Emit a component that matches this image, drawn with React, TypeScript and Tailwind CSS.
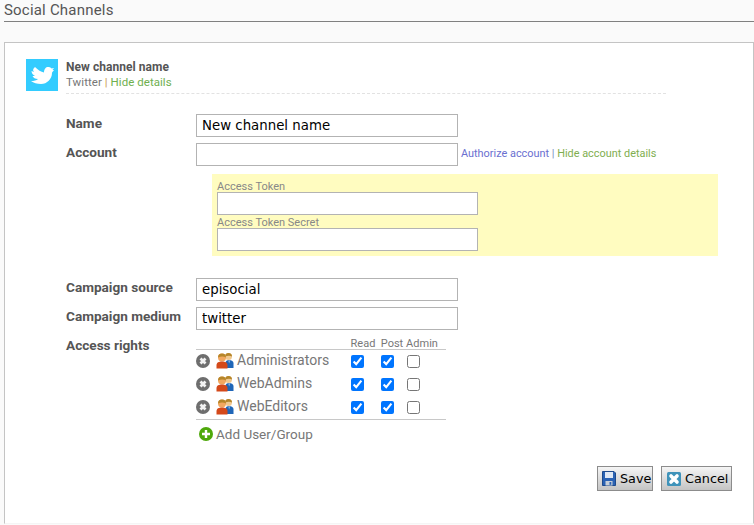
const labelClass = 'w-[130px] shrink-0 text-[13.600px] font-bold leading-[18px] text-[#555]';
const inputClass = 'block h-[23px] w-[262px] border border-[#b3b3b3] bg-white px-[5px] font-["DejaVu_Sans"] text-[13.333px] text-black outline-none';
const buttonClass = 'flex h-[25px] items-center gap-1 border border-[#8c8c8c] bg-gradient-to-b from-[#f5f5f5] to-[#c4c4c4] font-["DejaVu_Sans"] text-[12.800px] text-black';

const rights = [
  { name: 'Administrators', read: true, post: true, admin: false },
  { name: 'WebAdmins', read: true, post: true, admin: false },
  { name: 'WebEditors', read: true, post: true, admin: false },
];

function TwitterIcon(): React.ReactElement {
  return (
    <div className="h-8 w-8 shrink-0 bg-[#33ccff]">
      <svg width="32" height="32" viewBox="0 0 32 32" fill="#fff">
        <path d="M9 8C12 11 15 13 18 13.500C18 10 20 8 22 8C23.500 8 25 8.500 25.500 9.500L28 9L26.500 11L28 11C27 12.500 26 13 26 14C26 20 21 25 15 25C11 25 7.500 24 5 22C8 22 10.500 21.500 12 20C9 20 7.500 19 6.500 17L9 17C7 16 5.500 14 5.500 12L8 13C6.500 11.500 7 9.500 9 8Z" />
      </svg>
    </div>
  );
}

function RemoveIcon(): React.ReactElement {
  return (
    <svg width="14" height="14" viewBox="0 0 14 14" className="shrink-0">
      <circle cx="7" cy="7" r="7" fill="#6e6e6e" />
      <path d="M4.500 4.500l5 5M9.500 4.500l-5 5" stroke="#f2f2f2" strokeWidth="2.800" />
    </svg>
  );
}

function UsersIcon(): React.ReactElement {
  return (
    <svg width="18" height="17" viewBox="0 0 18 17" className="block shrink-0">
      <circle cx="12.500" cy="4.500" r="3.500" fill="#f0c890" />
      <path d="M9 4.500a3.500 3.500 0 0 1 7 0c-1.500-1-4.500-1-7 0z" fill="#b5862a" />
      <path d="M9.500 16V11c0-2 1.500-3 3.500-3s4.500 1 4.500 3v5z" fill="#1f66b8" />
      <path d="M12.500 8.500h1.200l-.6 3z" fill="#e6eef7" />
      <circle cx="6" cy="5.500" r="4" fill="#f2a860" />
      <path d="M2 5.500a4 4 0 0 1 8 0c-2-1.200-5.500-1.200-8 0z" fill="#b5862a" />
      <path d="M.5 16.500V13c0-2.500 2.500-3.500 5.500-3.500s5.500 1 5.500 3.500v3.500z" fill="#d4491a" />
    </svg>
  );
}

function AddIcon(): React.ReactElement {
  return (
    <svg width="14" height="14" viewBox="0 0 14 14" className="shrink-0">
      <circle cx="7" cy="7" r="7" fill="#4ea80b" />
      <path d="M7 3v8M3 7h8" stroke="#fff" strokeWidth="2.400" />
    </svg>
  );
}

function SaveIcon(): React.ReactElement {
  return (
    <svg width="14" height="15" viewBox="0 0 14 15" className="shrink-0">
      <path d="M.5.500h11.500l1.500 1.500v12.500H.5z" fill="#2a62b4" stroke="#1d4a8c" />
      <rect x="3" y="1" width="8" height="6" fill="#dfe8f4" />
      <rect x="3.500" y="10" width="7" height="4.500" fill="#c7cfd8" />
      <rect x="7.500" y="11" width="1.800" height="2.800" fill="#2a62b4" />
    </svg>
  );
}

function CancelIcon(): React.ReactElement {
  return (
    <svg width="14" height="14" viewBox="0 0 14 14" className="shrink-0">
      <rect width="14" height="14" rx="1.500" fill="#3f93ba" />
      <path d="M4 4l6 6M10 4l-6 6" stroke="#fff" strokeWidth="3.600" strokeLinecap="round" />
    </svg>
  );
}

function RightBox({ checked }: { checked: boolean }): React.ReactElement {
  return (
    <input
      type="checkbox"
      defaultChecked={checked}
      className="m-0 h-[13px] w-[13px] accent-[#0075ff]"
    />
  );
}

export default function App(): React.ReactElement {
  return (
    <div className="h-[525px] overflow-hidden bg-[#fafafa] pl-1 font-['Roboto',sans-serif]">
      <h1 className="h-[22px] border-b border-[#808080] pt-[3px] text-[15px] leading-[15px] tracking-[.2px] text-[#555]">
        Social Channels
      </h1>

      <div className="mt-5 h-[482px] border border-[#c4c4c4] border-b-[#f5f5f5] bg-white pl-[21px] pt-[16px]">
        <div className="flex gap-2">
          <TwitterIcon />
          <div className="h-[35px] w-[600px] border-b border-dashed border-[#e2e2e2] pt-[1px] text-[11.500px] leading-[15px] tracking-[.05px]">
            <div className="text-[12px] font-bold text-[#555]">New channel name</div>
            <div className="text-[#777]">
              Twitter <span className="text-[#c89a55]">|</span>{' '}
              <a className="text-[#6fb04f]">Hide details</a>
            </div>
          </div>
        </div>

        <div className="ml-10 mt-5">
          <div className="flex items-start">
            <label className={labelClass}>Name</label>
            <input className={inputClass} defaultValue="New channel name" />
          </div>

          <div className="mt-[6px] flex items-start">
            <label className={labelClass}>Account</label>
            <input className={inputClass} />
            <div className="ml-[3px] mt-[3px] text-[10.900px] leading-[16px]">
              <a className="text-[#6a6fd0]">Authorize account</a>{' '}
              <span className="text-[#7a8fc0]">|</span>{' '}
              <a className="text-[#7fae4f]">Hide account details</a>
            </div>
          </div>

          <div className="ml-[146px] mt-2 h-[82px] w-[506px] bg-[#fffcc0] px-[5px] pt-[7px] text-[11px] text-[#888]">
            <div className="h-[11px] leading-[12px]">Access Token</div>
            <input className="block h-[23px] w-[261px] border border-[#b3b3b3] bg-white" />
            <div className="mt-[2px] h-[11px] leading-[12px]">Access Token Secret</div>
            <input className="block h-[23px] w-[261px] border border-[#b3b3b3] bg-white" />
          </div>

          <div className="mt-[22px] flex items-start">
            <label className={labelClass}>Campaign source</label>
            <input className={inputClass} defaultValue="episocial" />
          </div>

          <div className="mt-[6px] flex items-start">
            <label className={labelClass}>Campaign medium</label>
            <input className={inputClass} defaultValue="twitter" />
          </div>

          <div className="mt-[6px] flex items-start">
            <label className={labelClass}>Access rights</label>
            <div className="w-[250px]">
              <div className="flex h-[14px] items-end justify-end border-b border-[#c8c8c8] pr-[8px] text-[11px] leading-[11px] text-[#777]">
                <span className="w-[30px] text-center">Read</span>
                <span className="w-[28px] text-center">Post</span>
                <span className="w-[32px] text-center">Admin</span>
              </div>
              {rights.map((row) => (
                <div key={row.name} className="flex h-[23px] items-center text-[14px] text-[#777]">
                  <div className="flex w-[164px] items-center pb-[2px]">
                    <RemoveIcon />
                    <span className="ml-[6px]"><UsersIcon /></span>
                    <span className="ml-[3px]">{row.name}</span>
                  </div>
                  <span className="-ml-[9px] flex w-[30px] justify-start"><RightBox checked={row.read} /></span>
                  <span className="flex w-[26px] justify-start"><RightBox checked={row.post} /></span>
                  <span className="flex w-[20px] justify-start"><RightBox checked={row.admin} /></span>
                </div>
              ))}
              <div className="flex items-center gap-[3px] border-t border-[#c8c8c8] pl-[3px] pt-[6px] text-[13.500px] leading-[16px] text-[#777]">
                <AddIcon />
                <span>Add User/Group</span>
              </div>
            </div>
          </div>
        </div>

        <div className="mr-[21px] mt-[24px] flex justify-end gap-2">
          <button className={`${buttonClass} w-[56px] pl-1`}>
            <SaveIcon />
            Save
          </button>
          <button className={`${buttonClass} w-[71px] pl-[5px]`}>
            <CancelIcon />
            Cancel
          </button>
        </div>
      </div>
    </div>
  );
}
